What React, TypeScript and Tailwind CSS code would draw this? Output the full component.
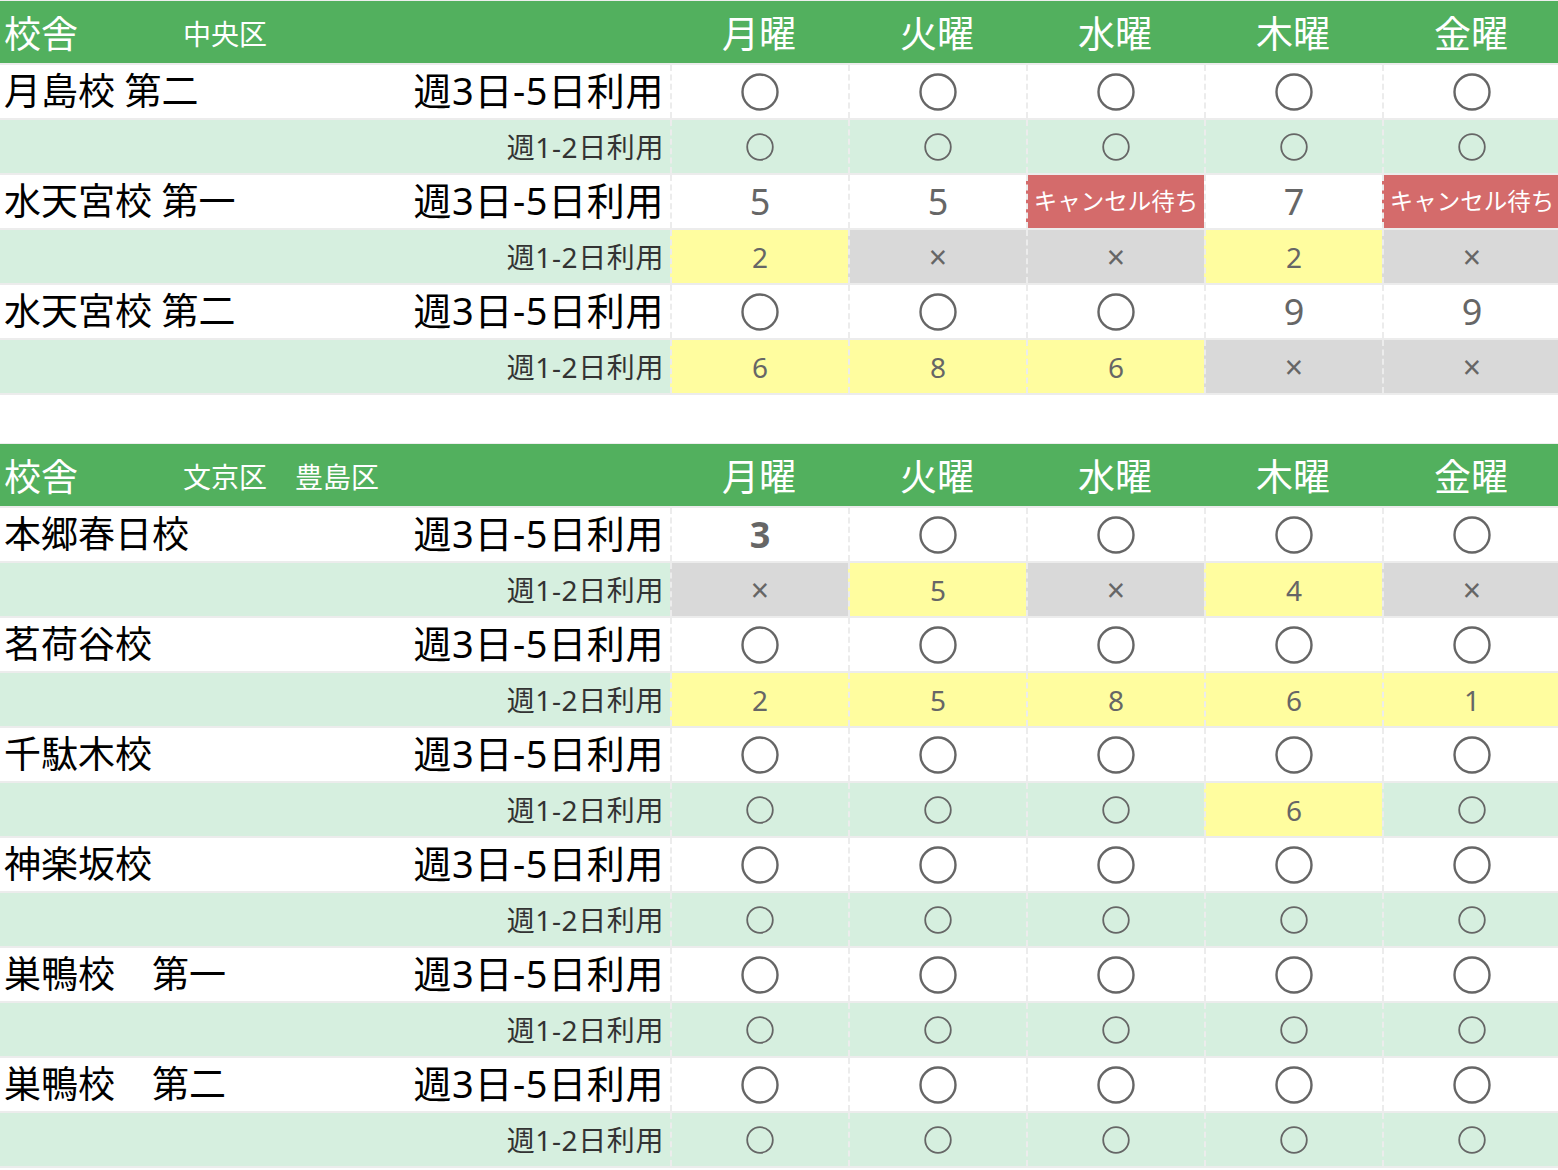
import React from "react"

type Cell =
  | { kind: "o" }
  | { kind: "n"; v: string; bg?: "y" | "g"; bold?: boolean }
  | { kind: "x" }
  | { kind: "wait" }

type School = { name: string; main: Cell[]; sub: Cell[] }

const O: Cell = { kind: "o" }
const X: Cell = { kind: "x" }
const W: Cell = { kind: "wait" }
const n = (v: string, bg?: "y" | "g", bold?: boolean): Cell => ({ kind: "n", v, bg, bold })
const all = (c: Cell): Cell[] => [c, c, c, c, c]

const DAYS = ["月曜", "火曜", "水曜", "木曜", "金曜"]

const CHUO: School[] = [
  { name: "月島校 第二", main: all(O), sub: all(O) },
  { name: "水天宮校 第一", main: [n("5"), n("5"), W, n("7"), W], sub: [n("2", "y"), X, X, n("2", "y"), X] },
  { name: "水天宮校 第二", main: [O, O, O, n("9"), n("9")], sub: [n("6", "y"), n("8", "y"), n("6", "y"), X, X] },
]

const BUNKYO: School[] = [
  { name: "本郷春日校", main: [n("3", undefined, true), O, O, O, O], sub: [X, n("5", "y"), X, n("4", "y"), X] },
  { name: "茗荷谷校", main: all(O), sub: [n("2", "y"), n("5", "y"), n("8", "y"), n("6", "y"), n("1", "y")] },
  { name: "千駄木校", main: all(O), sub: [O, O, O, n("6", "y"), O] },
  { name: "神楽坂校", main: all(O), sub: all(O) },
  { name: "巣鴨校　第一", main: all(O), sub: all(O) },
  { name: "巣鴨校　第二", main: all(O), sub: all(O) },
]

const font = { fontFamily: '"Noto Sans", "Noto Sans CJK JP", sans-serif' }

function Circle({ big }: { big: boolean }) {
  const s = big ? 38 : 28
  const r = big ? 17.5 : 12.8
  return (
    <svg width={s} height={s} viewBox={`0 0 ${s} ${s}`}>
      <circle cx={s / 2} cy={s / 2} r={r} fill="none" stroke="#666" strokeWidth={big ? 2.4 : 1.8} />
    </svg>
  )
}

function DayCell({ c, big, rowBg }: { c: Cell; big: boolean; rowBg: string }) {
  let bg = rowBg
  if (c.kind === "x") bg = "bg-[#d9d9d9]"
  if (c.kind === "wait") bg = "bg-[#d46b6b]"
  if (c.kind === "n" && c.bg === "y") bg = "bg-[#fffd9f]"
  if (c.kind === "n" && c.bg === "g") bg = "bg-[#d9d9d9]"
  return (
    <div className={`flex items-center justify-center border-l-2 border-dashed border-[#ececec] ${bg}`}>
      {c.kind === "o" && <Circle big={big} />}
      {c.kind === "x" && <span className="text-[32px] leading-none text-[#666]">×</span>}
      {c.kind === "wait" && <span className="text-[23.5px] leading-none text-white">キャンセル待ち</span>}
      {c.kind === "n" && (
        <span className={`leading-none text-[#666] ${big ? "text-[36px]" : "text-[28px]"} ${c.bold ? "font-bold" : ""}`}>
          {c.v}
        </span>
      )}
    </div>
  )
}

function Table({ area, schools }: { area: string; schools: School[] }) {
  return (
    <div className="border-b-2 border-[#ececec]">
      <div className="grid h-[63px] grid-cols-[670px_repeat(5,178px)] border-t border-[#eeeeee] bg-[#52b05e] pt-[3px] text-white">
        <div className="flex items-center pl-[4px]">
          <span className="w-[179px] text-[37px] leading-none">校舎</span>
          <span className="text-[28px] leading-none whitespace-pre">{area}</span>
        </div>
        {DAYS.map(d => (
          <div key={d} className="flex items-center justify-center text-[37px] leading-none">{d}</div>
        ))}
      </div>
      {schools.map(s => (
        <React.Fragment key={s.name}>
          <div className="grid h-[55px] grid-cols-[670px_repeat(5,178px)] border-t-2 border-[#ececec] bg-white">
            <div className="flex items-center justify-between pb-[3px] pl-[4px] pr-[6px] text-black">
              <span className="text-[37px] leading-none whitespace-pre">{s.name}</span>
              <span className="text-[38px] leading-none tracking-[0.6px]">週3日-5日利用</span>
            </div>
            {s.main.map((c, i) => <DayCell key={i} c={c} big rowBg="bg-white" />)}
          </div>
          <div className="grid h-[55px] grid-cols-[670px_repeat(5,178px)] border-t-2 border-[#ececec] bg-[#d6efdf]">
            <div className="flex items-center justify-end pr-[6px] text-[#333]">
              <span className="text-[28px] leading-none tracking-[0.6px]">週1-2日利用</span>
            </div>
            {s.sub.map((c, i) => <DayCell key={i} c={c} big={false} rowBg="bg-[#d6efdf]" />)}
          </div>
        </React.Fragment>
      ))}
    </div>
  )
}

export default function App() {
  return (
    <div className="flex w-[1558px] flex-col gap-[48px] overflow-hidden bg-white" style={font}>
      <Table area="中央区" schools={CHUO} />
      <Table area="文京区　豊島区" schools={BUNKYO} />
    </div>
  )
}
